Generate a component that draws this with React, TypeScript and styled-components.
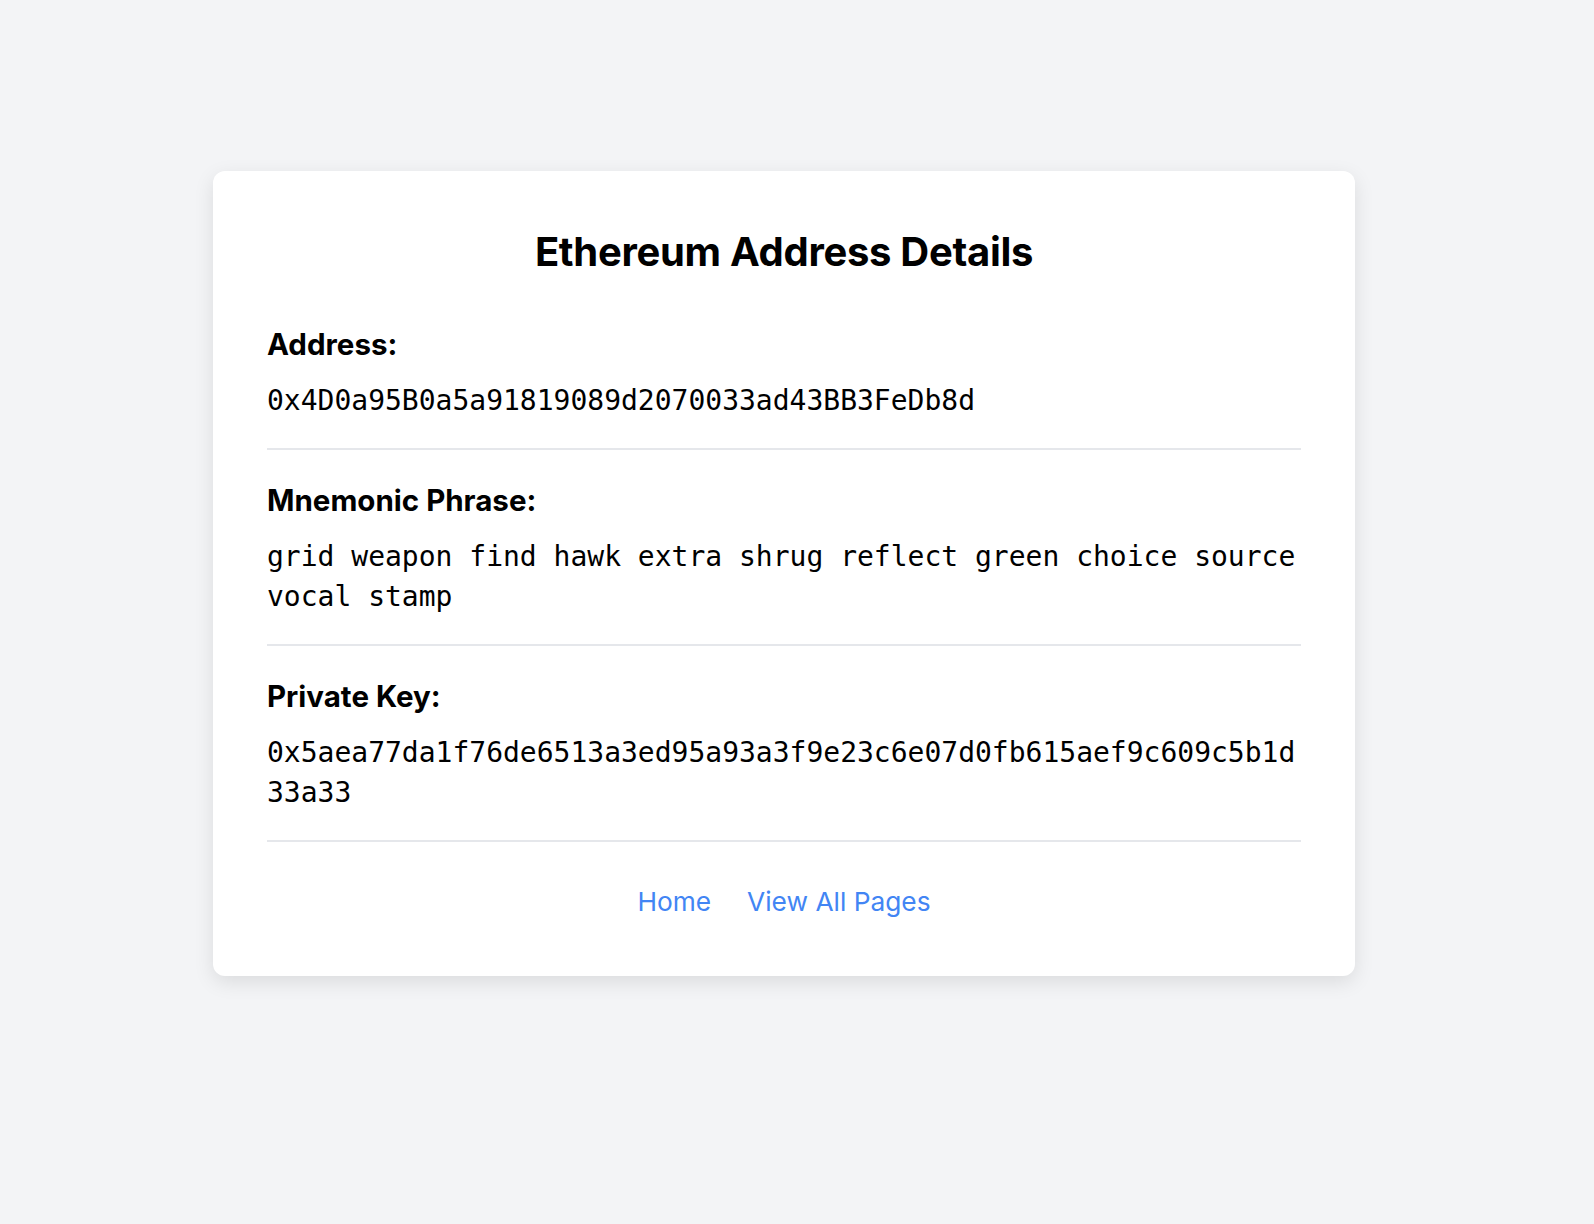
import React from "react";
import styled, { createGlobalStyle } from "styled-components";

const Global = createGlobalStyle`
  html, body {
    margin: 0;
    padding: 0;
    background: #f3f4f6;
  }
  body {
    font-family: Inter, "Noto Sans", sans-serif;
    color: #000;
    min-height: 1224px;
  }
  * { box-sizing: border-box; }
`;

const Page = styled.div`
  padding: 171px 239px 0 213px;
`;

const Card = styled.main`
  background: #fff;
  border-radius: 12px;
  box-shadow: 0 6px 20px rgba(0, 0, 0, 0.1);
  padding: 58px 54px 58px;
`;

const Title = styled.h1`
  margin: 0 0 19px;
  font-size: 40px;
  line-height: 46px;
  font-weight: 700;
  text-align: center;
  letter-spacing: -0.3px;
`;

const Section = styled.section`
  padding: 33px 0 27px;
  border-bottom: 2px solid #e5e7eb;
`;

const Label = styled.h2`
  margin: 0 0 20px;
  font-size: 29.5px;
  line-height: 34px;
  font-weight: 700;
`;

const Value = styled.p`
  margin: 0;
  font-family: "DejaVu Sans Mono", "Liberation Mono", monospace;
  font-size: 28px;
  line-height: 40px;
  word-break: break-all;
  overflow-wrap: anywhere;
`;

const Phrase = styled(Value)`
  word-break: normal;
  overflow-wrap: normal;
`;

const Footer = styled.nav`
  display: flex;
  justify-content: center;
  gap: 36px;
  padding-top: 44px;
`;

const Link = styled.a`
  font-size: 26.3px;
  line-height: 32px;
  color: #4285f4;
  text-decoration: none;
`;

const items = [
  { label: "Address:", value: "0x4D0a95B0a5a91819089d2070033ad43BB3FeDb8d", phrase: false },
  {
    label: "Mnemonic Phrase:",
    value: "grid weapon find hawk extra shrug reflect green choice source vocal stamp",
    phrase: true,
  },
  {
    label: "Private Key:",
    value: "0x5aea77da1f76de6513a3ed95a93a3f9e23c6e07d0fb615aef9c609c5b1d33a33",
    phrase: false,
  },
];

export default function App() {
  return (
    <>
      <Global />
      <Page>
        <Card>
          <Title>Ethereum Address Details</Title>
          {items.map((it) => (
            <Section key={it.label}>
              <Label>{it.label}</Label>
              {it.phrase ? <Phrase>{it.value}</Phrase> : <Value>{it.value}</Value>}
            </Section>
          ))}
          <Footer>
            <Link href="#">Home</Link>
            <Link href="#">View All Pages</Link>
          </Footer>
        </Card>
      </Page>
    </>
  );
}
